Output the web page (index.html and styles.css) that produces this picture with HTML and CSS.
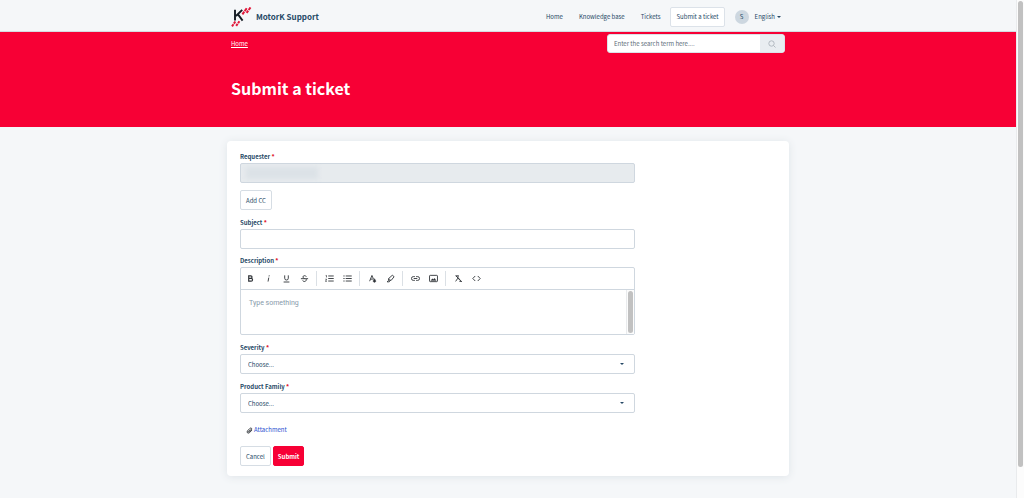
FILE: index.html
```html
<!DOCTYPE html>
<html lang="en">
<head>
<meta charset="utf-8">
<title>Submit a ticket - MotorK Support</title>
<link rel="stylesheet" href="styles.css">
</head>
<body>
<div class="page">
  <header class="header">
    <div class="container header-row">
      <a class="brand" href="#">
        <svg class="logo" viewBox="0 0 21 20" aria-hidden="true">
          <path d="M4 2.800v10.800M11.200 2.800L5 9M7 7.400l4.600 6.200" fill="none" stroke="#151c24" stroke-width="1.900"/>
          <path d="M11.400 7.400l1.900-2.700M13.700 4.100l2-2.900M15.600 5.900l1.600-2.300M17.700 3l1.800-2.600M1 19.400l1.500-2.200M2.900 16.600l1.400-2.100M5.200 18.900l1.400-2.100M7.100 16.200l1.300-2" fill="none" stroke="#e0183a" stroke-width="2"/>
        </svg>
        <span>MotorK Support</span>
      </a>
      <nav class="nav">
        <a href="#">Home</a>
        <a href="#">Knowledge base</a>
        <a href="#">Tickets</a>
        <a class="nav-button" href="#">Submit a ticket</a>
      </nav>
      <button class="avatar" type="button" aria-label="Profile">S</button>
      <button class="language" type="button">English<span class="caret"></span></button>
    </div>
  </header>
  <section class="banner">
    <div class="container">
      <div class="banner-row">
        <a class="crumb" href="#">Home</a>
        <form class="search">
          <input type="search" aria-label="Search" placeholder="Enter the search term here....">
          <button type="button" aria-label="Search">
            <svg viewBox="0 0 8 8"><circle cx="3.5" cy="3.5" r="2.7"/><path d="M5.4 5.4L7.5 7.5"/></svg>
          </button>
        </form>
      </div>
      <h1>Submit a ticket</h1>
    </div>
  </section>
  <main class="card">
    <form class="ticket">
      <div class="field">
        <label for="requester">Requester <b>*</b></label>
        <div class="locked"><input id="requester" type="text" disabled><span class="redacted"></span></div>
      </div>
      <button class="button add-cc" type="button">Add CC</button>
      <div class="field">
        <label for="subject">Subject <b>*</b></label>
        <input id="subject" type="text">
      </div>
      <div class="field rich-field">
        <label for="description">Description <b>*</b></label>
        <div class="editor">
          <div class="toolbar">
            <button type="button" aria-label="Bold"><svg viewBox="0 0 10 10"><path d="M3 2h2.3a1.4 1.4 0 0 1 0 2.8H3zM3 4.8h2.7a1.6 1.6 0 0 1 0 3.2H3z" stroke-width="1.3"/></svg></button>
            <button type="button" aria-label="Italic"><svg viewBox="0 0 10 10"><path d="M5.3 4L4.500 8.400M5.800 1.500l-.2 1.200"/></svg></button>
            <button type="button" aria-label="Underline"><svg viewBox="0 0 10 10"><path d="M3 1.500v3.200a2 2 0 0 0 4 0V1.500M1.800 8.900h6.400"/></svg></button>
            <button type="button" aria-label="Strikethrough"><svg viewBox="0 0 10 10"><path d="M7 3C6.600 1.400 3.300 1.400 3.300 3.200 3.300 4.200 4.200 4.600 5 5M1 5.200h8M6.900 5.600C7.500 9 3.400 9 3 7.100"/></svg></button>
            <i></i>
            <button type="button" aria-label="Numbered list"><svg viewBox="0 0 10 10"><path d="M3.600 2.200H9.700M3.600 5H9.700M3.600 7.800H9.700"/><path d="M.8 1.600h.8v2.200M.4 5.800h1.400L.6 8.200h1.400" stroke-width=".8"/></svg></button>
            <button type="button" aria-label="Bulleted list"><svg viewBox="0 0 10 10"><path d="M3 2.200H9.700M3 5H9.700M3 7.800H9.700M.4 2.200h1.400M.4 5h1.400M.4 7.800h1.400"/></svg></button>
            <i></i>
            <button type="button" aria-label="Text color"><svg viewBox="0 0 10 10"><path d="M1.800 8l2.600-6.400L6.200 6M2.800 5.700h2.600"/><path d="M7.200 5.200l1.200 1.900a1.400 1.400 0 1 1-2.400 0z" fill="#2f3338" stroke-width=".6"/></svg></button>
            <button type="button" aria-label="Highlight"><svg viewBox="0 0 10 10"><path d="M3 5l4-3.600L9 3 5.900 6.900H3.500zM3 5v2L1.200 8.700h2.400l1.500-1.800"/></svg></button>
            <i></i>
            <button type="button" aria-label="Link"><svg viewBox="0 0 10 10"><path d="M4.300 2.900H2.600a2.100 2.100 0 0 0 0 4.200h1.700M5.700 2.900h1.700a2.100 2.100 0 0 1 0 4.200H5.700M3 5h4"/></svg></button>
            <button type="button" aria-label="Image"><svg viewBox="0 0 10 10"><rect x=".6" y="1.500" width="8.800" height="7" rx=".8"/><path d="M2 7.200l1.700-2 1.200 1 1.200-1.600L8 7.200z" fill="#2f3338" stroke-width=".3"/></svg></button>
            <i></i>
            <button type="button" aria-label="Clear formatting"><svg viewBox="0 0 10 10"><path d="M2 2h3.400M4.600 2.400l-.5 2.200M1.800 8.200l2.500-3.600L8.600 8.600M1.800 1.900l5.200 4.700M6 8.200h2.600"/></svg></button>
            <button type="button" aria-label="Code view"><svg viewBox="0 0 10 10"><path d="M3.600 2.200L.9 5l2.700 2.800M6.400 2.200L9.100 5 6.400 7.800"/></svg></button>
          </div>
          <div class="editor-body">
            <textarea id="description" placeholder="Type something"></textarea>
            <div class="track"><div class="thumb"></div></div>
          </div>
        </div>
      </div>
      <div class="field">
        <label for="severity">Severity <b>*</b></label>
        <div class="select"><select id="severity"><option>Choose...</option></select><span class="caret"></span></div>
      </div>
      <div class="field">
        <label for="family">Product Family <b>*</b></label>
        <div class="select"><select id="family"><option>Choose...</option></select><span class="caret"></span></div>
      </div>
      <a class="attachment" href="#">
        <svg viewBox="0 0 8 8" aria-hidden="true"><path d="M6.800 3.500L4 6.500C2.400 8 .2 6.200 1.700 4.400L4.500 1.500C5.800.4 7.400 1.900 6.200 3.200L3.700 5.800C3 6.300 2.300 5.600 2.900 5L5 2.800"/></svg>
        <span>Attachment</span>
      </a>
      <div class="actions">
        <button class="button" type="button">Cancel</button>
        <button class="button primary" type="submit">Submit</button>
      </div>
    </form>
  </main>
</div>
<div class="track page-track"><div class="thumb"></div></div>
</body>
</html>
```
FILE: styles.css
```css
* {
  box-sizing: border-box;
}

body {
  margin: 0;
  display: flex;
  min-height: 100vh;
  background: #f5f7f9;
  color: #264966;
  font: 6px/12px "Noto Sans CJK SC", "Noto Sans", sans-serif;
}

button,
input,
select,
textarea {
  margin: 0;
  padding: 0;
  border: 0;
  background: none;
  color: inherit;
  font: inherit;
}

a {
  color: inherit;
  text-decoration: none;
}

svg {
  display: block;
  fill: none;
  stroke: #2f3338;
}

.page {
  flex: 1;
  min-width: 0;
}

.container {
  max-width: 554px;
  margin: 0 auto;
}

.header {
  border-bottom: 1px solid #d5dbe1;
}

.header-row {
  display: flex;
  align-items: center;
  height: 31px;
  padding-top: 2px;
}

.brand {
  display: flex;
  align-items: center;
  gap: 4px;
  margin-right: auto;
  font-size: 8px;
  font-weight: 700;
}

.logo {
  width: 21px;
  height: 20px;
}

.nav {
  display: flex;
  align-items: center;
  gap: 16px;
}

.nav-button {
  margin-left: -6px;
  padding: 3px 5px;
  border: 1px solid #dce2e9;
  border-radius: 2px;
  background: #fff;
}

.avatar {
  width: 14px;
  height: 14px;
  margin: 0 6px 0 10px;
  border-radius: 50%;
  background: #cdd7e0;
  line-height: 14px;
}

.language {
  display: flex;
  align-items: center;
  gap: 2px;
  margin-right: 4px;
}

.caret {
  border: 2px solid transparent;
  border-top-color: #264966;
  border-bottom: 0;
}

.banner {
  min-height: 95px;
  padding-top: 2px;
  background: #f70035;
  color: #fff;
}

.banner-row {
  display: flex;
  align-items: center;
  justify-content: space-between;
}

.crumb {
  text-decoration: underline;
}

.search {
  display: flex;
  width: 178px;
  height: 19px;
  border: 1px solid #dce2e9;
  border-radius: 3px;
  overflow: hidden;
  background: #fff;
  color: #264966;
}

.search input {
  flex: 1;
  min-width: 0;
  padding: 0 6px;
}

.search input::placeholder {
  color: #5d6b78;
  opacity: 1;
}

.search button {
  display: grid;
  place-items: center;
  width: 24px;
  background: #e9edf1;
}

.search svg {
  width: 8px;
  height: 8px;
  stroke: #b3bac1;
}

h1 {
  margin: 23px 0 0;
  font-size: 16px;
  line-height: 24px;
}

.card {
  max-width: 562px;
  margin: 14px auto 21px;
  padding: 9px 13px 10px;
  border-radius: 4px;
  background: #fff;
  box-shadow: 0 1px 8px #dfe4e8;
}

.ticket {
  display: flex;
  flex-direction: column;
  gap: 6px;
  max-width: 395px;
}

.field {
  display: flex;
  flex-direction: column;
}

label {
  padding-top: 1px;
  font-weight: 700;
}

.rich-field label {
  padding-top: 0;
}

label b {
  color: #e02030;
}

.field input,
.select select,
.editor {
  width: 100%;
  border: 1px solid #cfd7df;
  border-radius: 2px;
  background: #fff;
}

.field input,
.select select {
  display: block;
  height: 20px;
  padding: 1px 7px 0;
}

.field input:disabled {
  background: #e7ebee;
}

.locked,
.select {
  position: relative;
}

.redacted {
  position: absolute;
  top: 4px;
  left: 6px;
  width: 72px;
  height: 12px;
  background: #dce2e7;
  filter: blur(2px);
}

.button {
  height: 20px;
  padding: 1px 5px 0;
  border: 1px solid #d6dde4;
  border-radius: 2px;
  background: #fff;
}

.add-cc {
  align-self: flex-start;
  margin-top: 1px;
}

.toolbar {
  display: flex;
  height: 22px;
  border-bottom: 1px solid #cfd7df;
}

.toolbar button {
  display: grid;
  place-items: center;
  width: 18px;
}

.toolbar svg {
  width: 9px;
  height: 9px;
}

.toolbar i {
  width: 1px;
  margin: 3px;
  background: #dbe0e5;
}

.editor-body {
  display: flex;
}

.editor textarea {
  flex: 1;
  height: 44px;
  padding: 7px 8px;
  resize: none;
  font-family: Roboto, sans-serif;
  font-size: 7px;
}

.editor textarea::placeholder {
  color: #8799aa;
  opacity: 1;
}

.track {
  width: 8px;
  padding: 1px;
  border-left: 1px solid #e9ebed;
  background: #fcfcfc;
}

.thumb {
  width: 5px;
  height: 100%;
  border-radius: 3px;
  background: #c1c1c1;
}

.page-track {
  height: 100vh;
}

.page-track .thumb {
  height: 94%;
}

.select select {
  appearance: none;
}

.select .caret {
  position: absolute;
  top: 9px;
  right: 11px;
}

.attachment {
  display: flex;
  align-items: center;
  gap: 1px;
  align-self: flex-start;
  margin: 5px 0 4px 6px;
  color: #1f50d0;
}

.attachment svg {
  width: 7px;
  height: 7px;
}

.actions {
  display: flex;
  gap: 2px;
}

.primary {
  padding: 1px 4px 0;
  border-color: #f70035;
  background: #f70035;
  color: #fff;
  font-weight: 700;
}
```
